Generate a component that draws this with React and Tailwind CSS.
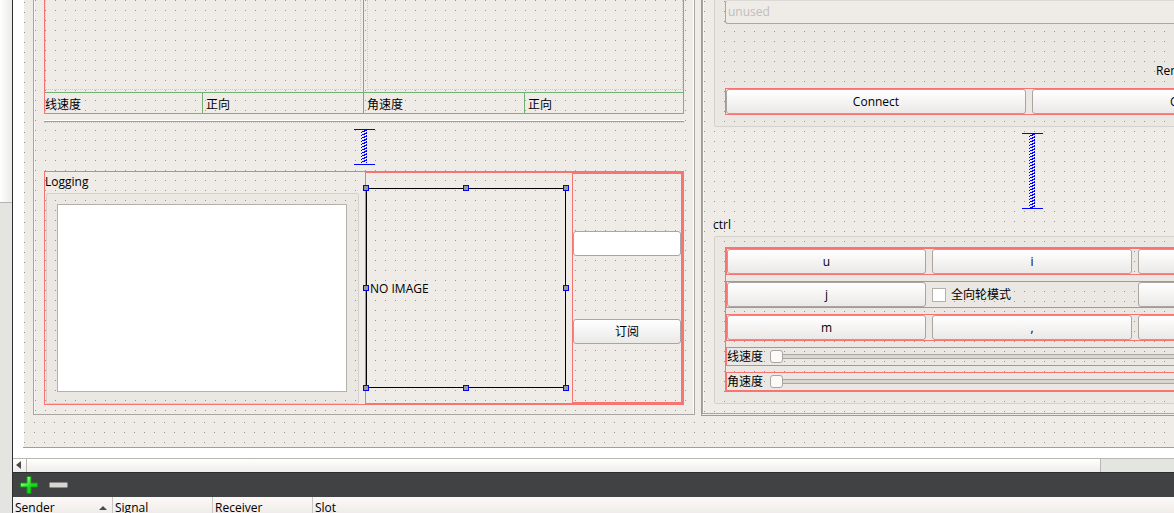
import clsx from 'clsx';

const DOTS = 'bg-[#efebe7] bg-[conic-gradient(from_270deg_at_1px_1px,#999692_90deg,transparent_0)] bg-[size:10px_10px]';
const BUTTON = 'h-[25px] rounded-[3px] border border-[#a9a6a2] bg-linear-to-b from-white to-[#ebe9e7] text-center leading-5';

const COLUMNS = ['Sender', 'Signal', 'Receiver', 'Slot'];

function Button({ children, className, label }) {
  return <button type="button" aria-label={label} className={clsx(BUTTON, className)}>{children}</button>;
}

// Vertical spacer item: two end bars joined by a spring
function Spacer({ height }) {
  const coils = [];
  for (let y = 1; y < height - 2; y += 3) {
    coils.push(`M10 ${y}h3v1h-3zM8 ${y + 1}h3v1h-3zM7 ${y + 2}h1v1h-1zM12 ${y + 2}h1v1h-1z`);
  }
  return (
    <svg width="21" height={height} viewBox={`0 0 21 ${height}`} fill="#0000ff" shapeRendering="crispEdges" className="mx-auto my-[6px] block">
      <path d={`M0 0h21v1H0zM0 ${height - 1}h21v1H0z`} />
      <path d={coils.join('')} />
    </svg>
  );
}

function Handle({ className }) {
  return <span className={clsx('absolute size-[6px] border border-[#0000ff] bg-[#999794]', className)} />;
}

function GroupBox({ children, className }) {
  return (
    <div className={clsx('rounded-[2px] border border-[#d4d1cd] bg-black/[0.015]', className)}>
      {children}
    </div>
  );
}

function PadRow({ children }) {
  return (
    <div className="grid grid-cols-[199px_200px_200px] gap-[6px] border border-[#f87472]">
      {children}
    </div>
  );
}

function SpeedRow({ id, label }) {
  return (
    <div className="flex h-[19px] items-center border border-[#f87472]">
      <label htmlFor={id} className="w-[43px] leading-4">{label}</label>
      <input
        id={id}
        type="range"
        defaultValue="0"
        className="h-[13px] flex-1 appearance-none bg-transparent [&::-webkit-slider-runnable-track]:h-[5px] [&::-webkit-slider-runnable-track]:border-y [&::-webkit-slider-runnable-track]:border-[#a9a6a2] [&::-webkit-slider-runnable-track]:bg-[#d9d6d2] [&::-webkit-slider-thumb]:-mt-[5px] [&::-webkit-slider-thumb]:size-[13px] [&::-webkit-slider-thumb]:appearance-none [&::-webkit-slider-thumb]:rounded-[3px] [&::-webkit-slider-thumb]:border [&::-webkit-slider-thumb]:border-[#a9a6a2] [&::-webkit-slider-thumb]:bg-[#fbfaf9]"
      />
    </div>
  );
}

function MotionPanel() {
  return (
    <section className={clsx(DOTS, 'ml-[9px] w-[662px] shrink-0 border-x border-b border-[#a9a6a2] bg-position-[1px_0px] px-[10px] pb-[9px] shadow-[inset_1px_0_#f8f6f4,inset_-1px_0_#fff]')}>
      <div className="grid grid-cols-[158px_161px_161px_158px] border-x border-b border-[#f87472]">
        <div className="col-span-2 h-[93px] border-r border-b border-[#72b172] pr-[2px] pb-[2px]">
          <div className="h-full border-x border-b border-dotted border-[#cfccc8]" />
        </div>
        <div className="col-span-2 h-[93px] border-b border-[#72b172] pb-[2px] pl-[3px]">
          <div className="h-full border-x border-b border-dotted border-[#cfccc8]" />
        </div>
        <div className="h-5 border-r border-[#72b172] leading-6">线速度</div>
        <div className="h-5 border-r border-[#72b172] pl-[3px] leading-6">正向</div>
        <div className="h-5 border-r border-[#72b172] pl-[3px] leading-6">角速度</div>
        <div className="h-5 pl-[3px] leading-6">正向</div>
      </div>

      <div className="h-[6px] bg-[#efebe7]" />
      <div className="border-t border-b border-t-white border-b-[#a19e9a]" />
      <div className="border-b border-dotted border-[#cfccc8]" />
      <Spacer height={36} />

      <div className="flex h-[234px] border border-[#f87472]">
        {/* log output */}
        <div className="flex w-[320px] flex-col pr-[6px] pl-px">
          <label htmlFor="log" className="-ml-px leading-5">Logging</label>
          <GroupBox className="mt-px flex flex-1 p-[10px] pr-[11px] pb-[11px]">
            <textarea id="log" readOnly className="w-full resize-none border border-[#b4b1ad] bg-white" />
          </GroupBox>
        </div>

        <div className="flex flex-1 border border-[#f87472]">
          {/* selected label with resize handles */}
          <div className="relative mt-[15px] flex size-[200px] items-center border border-black pt-[2px] pl-[3px]">
            <span className="leading-5">NO IMAGE</span>
            <Handle className="-top-1 -left-1" />
            <Handle className="-top-1 left-24" />
            <Handle className="-top-1 -right-1" />
            <Handle className="top-24 -left-1" />
            <Handle className="top-24 -right-1" />
            <Handle className="-bottom-1 -left-1" />
            <Handle className="-bottom-1 left-24" />
            <Handle className="-right-1 -bottom-1" />
          </div>
          <div className="ml-[6px] flex flex-1 flex-col border border-[#f87472] pt-[57px]">
            <input type="text" aria-label="topic" className="h-[25px] w-full rounded-[3px] border border-[#a9a6a2] bg-white px-[3px]" />
            <Button className="mt-[63px]">订阅</Button>
          </div>
        </div>
      </div>
    </section>
  );
}

function ConnectionPanel() {
  return (
    <section className="ml-[6px] shrink-0 border-b border-l border-[#f87472] pb-px">
      <div className={clsx(DOTS, 'border-b border-l border-[#a9a6a2] bg-position-[1px_1px] pr-[11px] pb-[9px] pl-[10px] shadow-[inset_1px_0_#f8f6f4]')}>
        <GroupBox className="ml-px w-[637px] border-t-0 px-[10px] pb-[11px]">
          <input
            type="text"
            disabled
            placeholder="unused"
            aria-label="unused"
            className="block h-6 w-full rounded-[3px] border border-[#a9a6a2] border-t-[#dcd9d6] bg-[#efebe7] px-[2px] pb-[2px] placeholder:text-[#bebebe]"
          />
          <div className="flex h-16 items-end pb-[7px] pl-[431px] leading-5">Rem</div>
          <div className="flex gap-[6px] border border-[#f87472]">
            <Button className="w-[300px]">Connect</Button>
            <button type="button" className={clsx(BUTTON, 'w-[300px]')}>
              <span className="block pl-[137px] text-left">C</span>
            </button>
          </div>
        </GroupBox>

        <Spacer height={76} />

        <div className="h-[21px] leading-5">ctrl</div>
        <GroupBox className="ml-px w-[637px] px-[10px] pt-[10px] pb-[11px]">
          <div className="flex flex-col gap-[6px] border border-[#f87472]">
            <PadRow>
              <Button>u</Button>
              <Button>i</Button>
              <Button label="o" />
            </PadRow>
            <PadRow>
              <Button>j</Button>
              <label className="flex items-center gap-[5px]">
                <input type="checkbox" className="size-[14px] appearance-none border border-[#b4b1ad] bg-white" />
                全向轮模式
              </label>
              <Button label="l" />
            </PadRow>
            <PadRow>
              <Button>m</Button>
              <Button>,</Button>
              <Button label="." />
            </PadRow>
            <SpeedRow id="linear" label="线速度" />
            <SpeedRow id="angular" label="角速度" />
          </div>
        </GroupBox>
      </div>
    </section>
  );
}

export default function App() {
  return (
    <div className="flex h-screen overflow-hidden bg-white font-['Open_Sans','Noto_Sans_CJK_SC',sans-serif] text-xs text-black">
      <aside className="flex w-[13px] shrink-0 flex-col border-r border-[#2e2e2e] bg-[#e4e4e0]">
        <div className="h-[203px] border-b border-[#b5b5b1] bg-linear-to-r from-white to-[#ecebe8]" />
      </aside>

      <div className="flex min-w-0 flex-1 flex-col">
        {/* form canvas */}
        <main className="shrink-0 overflow-hidden pb-[10px] pl-[10px]">
          <div className="border-b border-[#a19e9a] pl-px">
            <div className={clsx(DOTS, 'flex items-start bg-position-[0px_2px] pb-[31px]')}>
              <MotionPanel />
              <ConnectionPanel />
            </div>
          </div>
        </main>

        <div className="flex h-[14px] shrink-0 border-t border-[#b9b7b4] bg-[#e4e4e0]">
          <button type="button" aria-label="Scroll left" className="flex w-[14px] items-center border-r border-[#b9b7b4] bg-linear-to-b from-white to-[#efedea] pb-px pl-[3px]">
            <svg width="5" height="8" viewBox="0 0 5 8"><path d="M5 0v8L0 4z" fill="#4a4a4a" /></svg>
          </button>
          <div className="w-[1074px] border-r border-[#b9b7b4] bg-linear-to-b from-white to-[#efedea]" />
        </div>

        <div className="flex h-[25px] shrink-0 items-center gap-[11px] border-t border-[#2c2c2c] bg-[#414244] pl-[7px]">
          <button type="button" aria-label="Add connection">
            <svg width="18" height="18" viewBox="0 0 18 18">
              <defs>
                <linearGradient id="plus" x1="0" y1="0" x2="1" y2="1">
                  <stop offset="0.2" stopColor="#a8f59a" />
                  <stop offset="0.55" stopColor="#1fd81f" />
                  <stop offset="1" stopColor="#00e000" />
                </linearGradient>
              </defs>
              <path d="M7 .5h4V7h6.5v4H11v6.500H7V11H.5V7H7z" fill="url(#plus)" stroke="#0b9a0b" />
            </svg>
          </button>
          <button type="button" aria-label="Remove connection">
            <svg width="19" height="6" viewBox="0 0 19 6">
              <rect x=".5" y=".5" width="18" height="5" rx="1" fill="#d9d6d2" stroke="#8b8986" />
            </svg>
          </button>
        </div>

        <table className="w-full table-fixed border-separate border-spacing-0">
          <thead>
            <tr className="h-[22px] bg-linear-to-b from-[#fdf9f6] to-[#e9e7e5]">
              {COLUMNS.map((name, i) => (
                <th key={name} className={clsx('p-0 pl-[2px] text-left font-normal', i < 3 && 'w-[100px] border-r border-[#c9c7c4]')}>
                  <span className="flex items-center justify-between pr-[5px]">
                    {name}
                    {i === 0 && <svg width="8" height="4" viewBox="0 0 8 4"><path d="M4 0l4 4H0z" fill="#4a4a4a" /></svg>}
                  </span>
                </th>
              ))}
            </tr>
          </thead>
        </table>
      </div>
    </div>
  );
}
